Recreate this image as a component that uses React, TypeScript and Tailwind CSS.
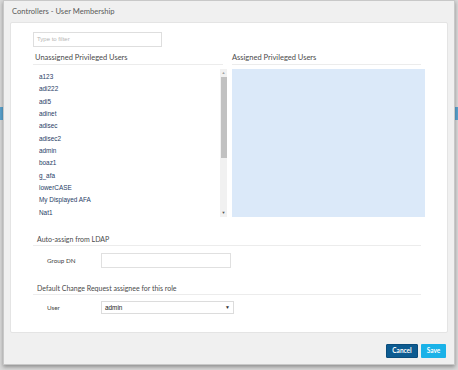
import React from "react";

const unassigned = [
  "a123",
  "adi222",
  "adi5",
  "adinet",
  "adisec",
  "adisec2",
  "admin",
  "boaz1",
  "g_afa",
  "lowerCASE",
  "My Displayed AFA",
  "Nat1",
];

function SectionTitle({ children }: { children: React.ReactNode }) {
  return (
    <div className="border-b border-[#ececec] pb-[1px] pl-[4px] text-[7px] leading-[10px] text-[#4a4a4a]">
      {children}
    </div>
  );
}

export default function App() {
  return (
    <div className="relative h-[370px] w-[458px] overflow-hidden bg-[#d9d9d9] font-['Lato','Liberation_Sans',sans-serif]">
      {/* page bits peeking out behind the modal */}
      <div className="absolute left-0 top-[107px] h-[13px] w-[4px] bg-[#5aa3cf]" />
      <div className="absolute right-0 top-[107px] h-[13px] w-[4px] bg-[#5aa3cf]" />

      <div className="relative ml-[3px] flex h-[365px] w-[452px] flex-col border border-[#c8c8c8] bg-[#f0f0f0] shadow-[0_2px_4px_rgba(0,0,0,0.35)]">
        <div className="h-[21px] pl-[8px] text-[7.6px] leading-[20px] text-[#5a5a5a]">
          Controllers - User Membership
        </div>

        <div className="mx-[6px] h-[311px] rounded-[2px] border border-[#e4e4e4] bg-white pl-[22px] pt-[9px]">
          <div className="flex h-[15px] w-[129px] items-center border border-[#dedede] pl-[3px] font-['Liberation_Sans',sans-serif] text-[6px] text-[#b5b5b5]">
            Type to filter
          </div>

          <div className="mt-[6px] flex gap-[5px]">
            <div className="w-[194px]">
              <div className="mr-[4px] border-b border-[#ececec] pb-[1px] pl-[2px] text-[7.5px] leading-[10px] text-[#4a4a4a]">
                Unassigned Privileged Users
              </div>
              <div className="mt-[4px] flex h-[148px]">
                <div className="flex-1 pt-[2px] pl-[6px] font-['Liberation_Sans',sans-serif] text-[6.4px] text-[#1f3d66]">
                  {unassigned.map((u) => (
                    <div key={u} className="h-[12.35px] leading-[12.35px]">
                      {u}
                    </div>
                  ))}
                </div>
                <div className="flex w-[7px] flex-col items-center bg-[#f1f1f1]">
                  <div className="h-[8px] text-[4px] leading-[8px] text-[#a3a3a3]">▲</div>
                  <div className="h-[81px] w-[6px] bg-[#c1c1c1]" />
                  <div className="flex-1" />
                  <div className="h-[8px] text-[4px] leading-[8px] text-[#505050]">▼</div>
                </div>
              </div>
            </div>

            <div className="w-[194px]">
              <div className="mr-[5px] border-b border-[#ececec] pb-[1px] text-[7.5px] leading-[10px] text-[#4a4a4a]">
                Assigned Privileged Users
              </div>
              <div className="mt-[4px] h-[148px] w-[193px] bg-[#dbe9f9]" />
            </div>
          </div>

          <div className="mr-[26px] mt-[17px]">
            <SectionTitle>Auto-assign from LDAP</SectionTitle>
            <div className="mt-[7px] flex items-center">
              <div className="w-[68px] pl-[14px] text-[6.3px] text-[#444]">Group DN</div>
              <div className="h-[15px] w-[130px] border border-[#e0e0e0]" />
            </div>
          </div>

          <div className="mr-[26px] mt-[15px]">
            <SectionTitle>Default Change Request assignee for this role</SectionTitle>
            <div className="mt-[6px] flex items-center">
              <div className="w-[68px] pl-[14px] text-[6.3px] text-[#444]">User</div>
              <div className="flex h-[13px] w-[133px] items-center justify-between border border-[#dcdcdc] pl-[3px] pr-[3px] font-['Liberation_Sans',sans-serif] text-[6.4px] text-[#222]">
                <span>admin</span>
                <span className="text-[5px] text-[#333]">▼</span>
              </div>
            </div>
          </div>
        </div>

        <div className="mt-[11px] flex justify-end gap-[3px] pr-[8px]">
          <button className="h-[14px] w-[32px] rounded-[1px] border border-[#0a4d7c] bg-[#0d5b91] text-[6.5px] font-bold leading-[12px] text-white">
            Cancel
          </button>
          <button className="h-[14px] w-[25px] rounded-[1px] bg-[#1ab2e8] text-[6.5px] font-bold leading-[14px] text-white">
            Save
          </button>
        </div>
      </div>
    </div>
  );
}
